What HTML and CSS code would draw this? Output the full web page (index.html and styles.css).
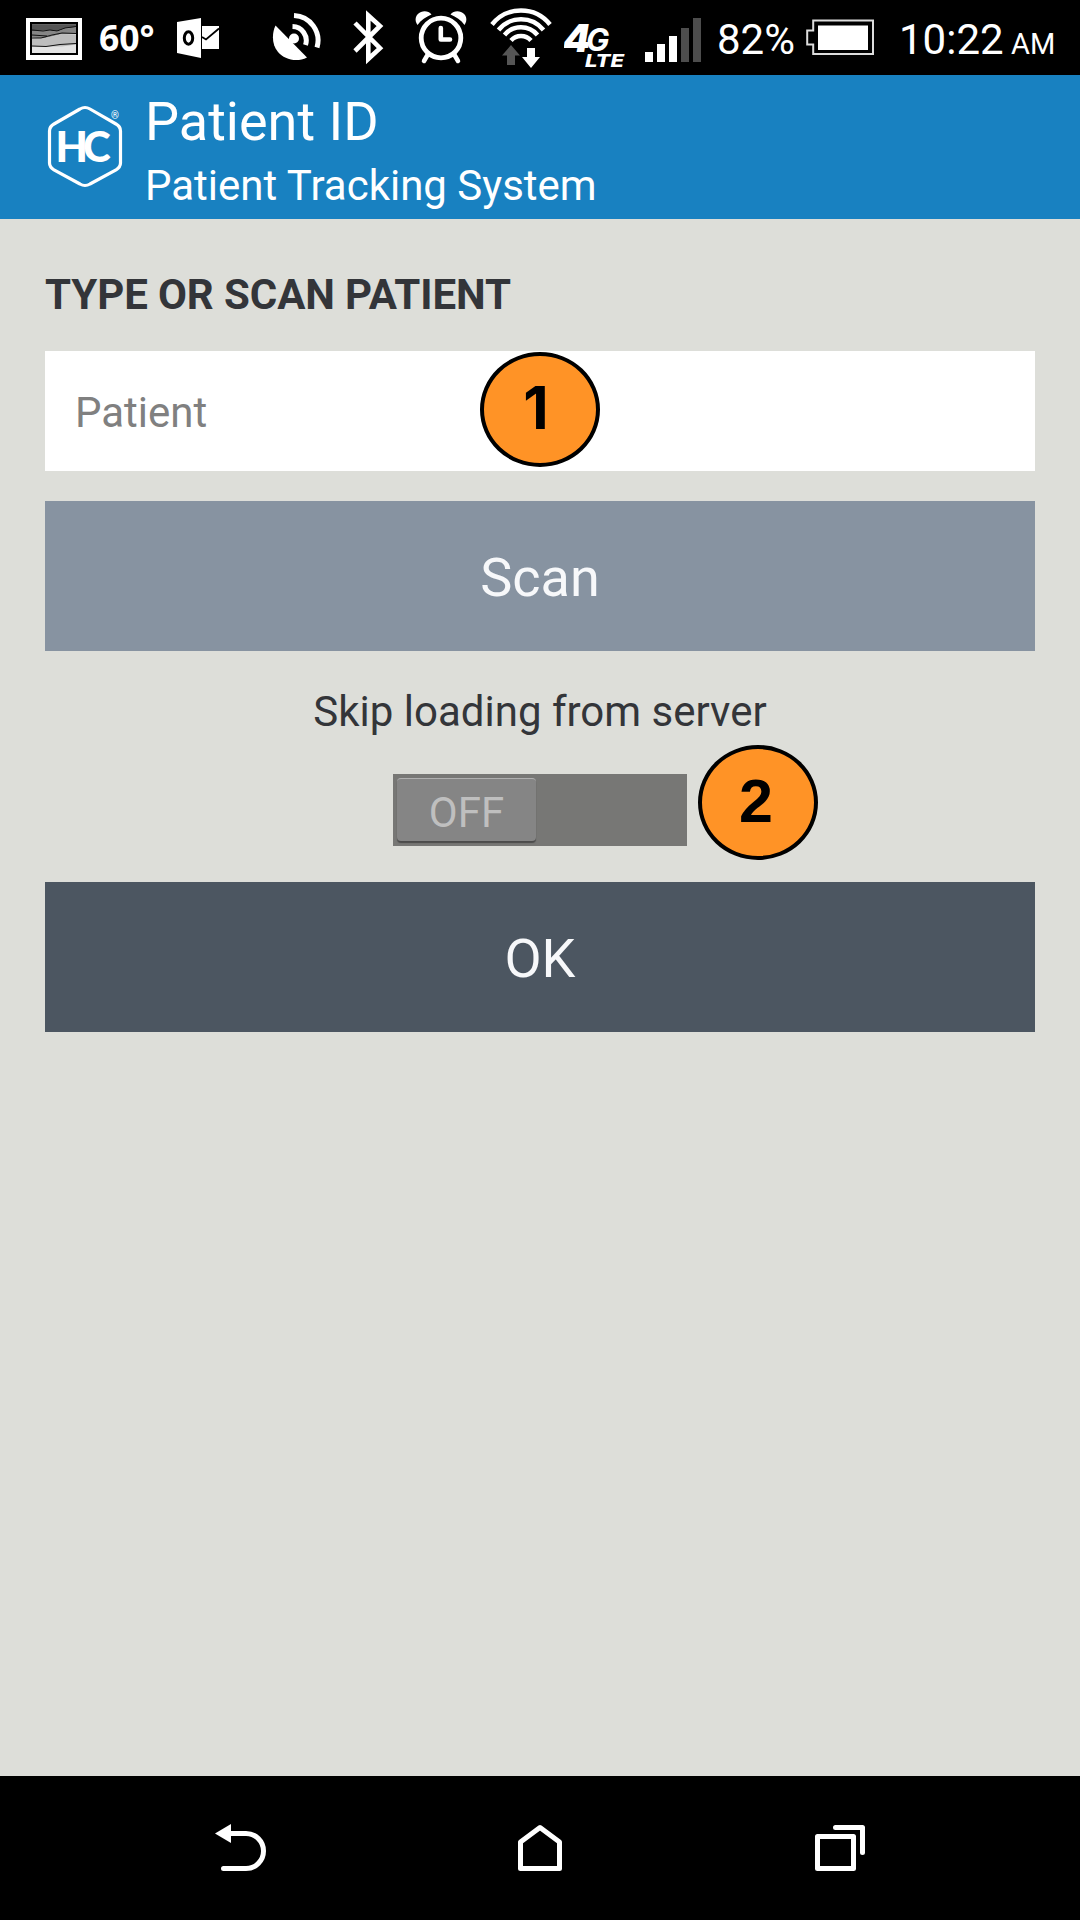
FILE: index.html
```html
<!DOCTYPE html>
<html lang="en">
<head>
<meta charset="utf-8">
<title>Patient ID</title>
<link rel="stylesheet" href="styles.css">
</head>
<body>
<div class="screen">
  <div class="status">
    <svg class="s-photo" width="60" height="75" viewBox="24 0 60 75">
      <rect x="26" y="18" width="56" height="42" fill="#fff"/>
      <rect x="30" y="22" width="48" height="33" fill="#000"/>
      <rect x="32" y="24.5" width="44" height="28.5" fill="#e4e4e4"/>
      <path d="M32 24.500h44v3l-11 1-8 3-8-1-17 1z" fill="#555"/>
      <path d="M32 31l17-.5 8 1 8-3 11-1v6l-14 .5-10 2.500-9 2-11-1z" fill="#858585"/>
      <path d="M32 38l11 .5 9-2 10-2.500 14 .5v10l-14 2-30 0z" fill="#bdbdbd"/>
      <path d="M32 30l11 1 7-1 7 1 8-3 11-1.500M32 35l15 1M32 38h9l11-3 10-2 14 .5M32 46l14 .5 14-2 16-1" fill="none" stroke="#111" stroke-width="1"/>
    </svg>
    <span class="s-temp">60°</span>
    <svg class="s-mail" width="46" height="75" viewBox="175 0 46 75">
      <path d="M177 22l24-4v40l-24-5z" fill="#fff"/>
      <rect x="202" y="26" width="17" height="23" fill="#fff"/>
      <path d="M202 37l4 2.500 13-11" fill="none" stroke="#000" stroke-width="1.800"/>
      <ellipse cx="188.500" cy="38" rx="4.200" ry="6.200" fill="none" stroke="#000" stroke-width="3"/>
    </svg>
    <svg class="s-gps" width="50" height="75" viewBox="272 0 50 75">
      <path d="M275.500 25.500L307 57.500C296 63 284 59 278 52C272 45 271.500 34 275.500 25.500z" fill="#fff"/>
      <path d="M286 46l7-8" stroke="#fff" stroke-width="5"/>
      <circle cx="294" cy="38.500" r="5" fill="#fff"/>
      <path d="M292.500 26.500A14 14 0 0 1 305.500 45M294 15.500A25 25 0 0 1 317 47.500" fill="none" stroke="#fff" stroke-width="5"/>
    </svg>
    <svg class="s-bt" width="34" height="75" viewBox="352 0 34 75">
      <path d="M355 23l25 25.200L368.300 59V15.500L380 26 355 51" fill="none" stroke="#fff" stroke-width="4.600"/>
    </svg>
    <svg class="s-alarm" width="56" height="75" viewBox="413 0 56 75">
      <circle cx="441" cy="38" r="19.800" fill="none" stroke="#fff" stroke-width="4.800"/>
      <path d="M440.800 28v11.500H450" fill="none" stroke="#fff" stroke-width="4.600" stroke-linecap="round" stroke-linejoin="round"/>
      <path d="M417.500 25C414 20 415.500 14 421 12C425 10.500 429 11.500 431.500 14.500C426 17 421 20 417.500 25zM464.500 25C468 20 466.500 14 461 12C457 10.500 453 11.500 450.500 14.500C456 17 461 20 464.500 25z" fill="#fff"/>
      <path d="M427.500 55l-3.500 6M454.500 55l3.500 6" stroke="#fff" stroke-width="4.500" stroke-linecap="round"/>
    </svg>
    <svg class="s-wifi" width="66" height="75" viewBox="488 0 66 75">
      <path d="M492 24.500A37 37 0 0 1 550 24.500M498.500 30A29 29 0 0 1 543.500 30M504.500 35A21.500 21.500 0 0 1 537.500 35M511 40.500A13.500 13.500 0 0 1 531 40.500" fill="none" stroke="#fff" stroke-width="4.500"/>
      <path d="M511 45l9 10.500h-5V65h-8v-9.500h-5z" fill="#555"/>
      <path d="M527 48h8v9h5l-9 11-9-11h5z" fill="#fff"/>
    </svg>
    <svg class="s-lte" width="64" height="75" viewBox="564 0 64 75">
      <text class="network"><tspan class="four" x="563" y="52">4</tspan><tspan class="gee" x="586" y="50.500">G</tspan><tspan class="lte" x="585" y="67" textLength="39" lengthAdjust="spacingAndGlyphs">LTE</tspan></text>
    </svg>
    <svg class="s-bars" width="56" height="75" viewBox="645 0 56 75">
      <path d="M645 52h8v10h-8zM657 44h8v18h-8zM669 36h8v26h-8z" fill="#fff"/>
      <path d="M681 28h8v34h-8zM693 18h8v44h-8z" fill="#4d4d4d"/>
    </svg>
    <span class="s-pct">82%</span>
    <svg class="s-batt" width="70" height="75" viewBox="805 0 70 75">
      <path d="M813.200 20.500H873V54H813.200V44.500H807.200V30.500H813.200z" fill="none" stroke="#ddd" stroke-width="2"/>
      <rect x="818" y="25.500" width="50" height="24.500" fill="#fff"/>
    </svg>
    <span class="s-time">10:22</span><span class="s-ampm">AM</span>
  </div>

  <header class="header">
    <svg class="logo" width="78" height="90" viewBox="46 102 78 90">
      <path d="M80 109Q85 106 90 109L116 124Q120.500 126.500 120.500 131V163Q120.500 167 116 170L90 184Q85 187 80 184L54 170Q49.500 167 49.500 163V131Q49.500 126.500 54 124z" fill="none" stroke="#fff" stroke-width="3.200"/>
      <text class="mark" x="55.500" y="161.500">HC</text>
      <text class="reg" x="111" y="119">®</text>
    </svg>
    <div class="titles">
      <h1 class="title">Patient ID</h1>
      <div class="subtitle">Patient Tracking System</div>
    </div>
  </header>

  <main class="form">
    <h2 class="heading">TYPE OR SCAN PATIENT</h2>
    <div class="field">Patient<span class="badge badge-one">1</span></div>
    <div class="button scan">Scan</div>
    <div class="skip">Skip loading from server</div>
    <div class="toggle"><div class="thumb">OFF</div><span class="badge badge-two">2</span></div>
    <div class="button ok">OK</div>
  </main>

  <nav class="nav">
    <svg width="60" height="60" viewBox="210 1818 60 60">
      <path d="M215 1833.500l16-9.500v19z" fill="#fff"/>
      <path d="M230 1833.500h16a17.500 17.500 0 0 1 0 35h-22.500" fill="none" stroke="#fff" stroke-width="5" stroke-linecap="round"/>
    </svg>
    <svg width="60" height="60" viewBox="510 1818 60 60">
      <path d="M520.500 1842L540 1827.500 559.500 1842V1868.500H520.500z" fill="none" stroke="#fff" stroke-width="5" stroke-linejoin="round"/>
    </svg>
    <svg width="60" height="60" viewBox="810 1818 60 60">
      <path d="M817.500 1836.500h36v32h-36zM835.500 1827.500h27v25" fill="none" stroke="#fff" stroke-width="5" stroke-linecap="round" stroke-linejoin="round"/>
    </svg>
  </nav>
</div>
</body>
</html>
```
FILE: styles.css
```css
* { box-sizing: border-box; }

body {
  margin: 0;
  font-family: Roboto, "Liberation Sans", sans-serif;
  background: #ddded9;
}

.screen {
  display: flex;
  flex-direction: column;
  width: 1080px;
  height: 1920px;
  background: #ddded9;
}

/* Status bar */
.status {
  display: flex;
  flex: none;
  height: 75px;
  padding-left: 24px;
  background: #000;
  color: #fff;
  line-height: 75px;
  white-space: nowrap;
}
.status svg { flex: none; }
.status span { flex: none; }
.s-temp {
  width: 76px;
  margin-left: 15px;
  font: bold 35.5px/75px "Noto Sans", "Open Sans", sans-serif;
}
.s-gps { margin-left: 51px; }
.s-bt { margin-left: 30px; }
.s-alarm { margin-left: 27px; }
.s-wifi { margin-left: 19px; }
.s-lte { margin-left: 10px; }
.s-bars { margin-left: 17px; }
.s-pct { width: 88px; margin-left: 16px; font-size: 42px; line-height: 79px; }
.s-time { width: 113px; margin-left: 24px; font-size: 42px; line-height: 79px; }
.s-ampm { margin-left: -1px; font-size: 29px; line-height: 88px; }
.network {
  font: italic 900 39px Inter, sans-serif;
  fill: #fff;
}
.gee { font-size: 31px; font-weight: 700; }
.lte { font-size: 18px; font-weight: 800; }

/* App header */
.header {
  display: flex;
  flex: none;
  gap: 21px;
  height: 144px;
  padding: 15px 0 0 46px;
  background: #1881c1;
  color: #fff;
}
.logo { margin-top: 12px; }
.mark { font: 900 42px Lato, sans-serif; letter-spacing: -5px; fill: #fff; }
.reg { font: 10px Roboto, sans-serif; fill: #fff; }
.title { margin: 0; font-weight: 400; font-size: 54px; line-height: 63px; }
.subtitle { margin-top: 8px; font-size: 42px; line-height: 49px; }

/* Form */
.form {
  display: flex;
  flex: 1;
  flex-direction: column;
  padding: 51px 45px 0;
  color: #333539;
}
.heading {
  margin: 0 0 32px;
  font-size: 42px;
  line-height: 49px;
  letter-spacing: -0.1px;
}
.field {
  position: relative;
  height: 120px;
  padding: 3px 30px 0;
  background: #fff;
  color: #808080;
  font-size: 42px;
  line-height: 117px;
}
.button {
  height: 150px;
  padding-top: 3px;
  color: #f7f8fa;
  font-size: 54px;
  line-height: 147px;
  text-align: center;
}
.scan { margin-top: 30px; background: #8793a1; }
.ok { margin-top: 36px; background: #4c5661; }
.skip { margin: 36px 0 38px; font-size: 42px; line-height: 49px; text-align: center; }
.toggle {
  position: relative;
  align-self: center;
  width: 294px;
  height: 72px;
  padding: 4px 0 0 4px;
  background: #777775;
}
.thumb {
  width: 139px;
  height: 63px;
  padding-top: 4px;
  border-top: 1px solid #b0b0b0;
  border-radius: 4px;
  background: #858585;
  box-shadow: 0 2px 1px #4c4c4c;
  color: #bfbfbf;
  font-size: 42px;
  line-height: 60px;
  text-align: center;
}

/* Callout numbers */
.badge {
  position: absolute;
  width: 120px;
  height: 115px;
  padding-right: 4px;
  border: 4px solid #000;
  border-radius: 50%;
  background: #ff9326;
  color: #000;
  text-align: center;
}
.badge-one {
  left: 435px;
  top: 1px;
  padding-right: 8px;
  font: bold 59px/103px Inter, sans-serif;
}
.badge-two {
  left: 305px;
  top: -29px;
  font: bold 61px/105px "Liberation Sans", sans-serif;
}

/* Navigation bar */
.nav {
  display: flex;
  flex: none;
  justify-content: space-between;
  height: 144px;
  padding: 42px 210px 0;
  background: #000;
}
```
